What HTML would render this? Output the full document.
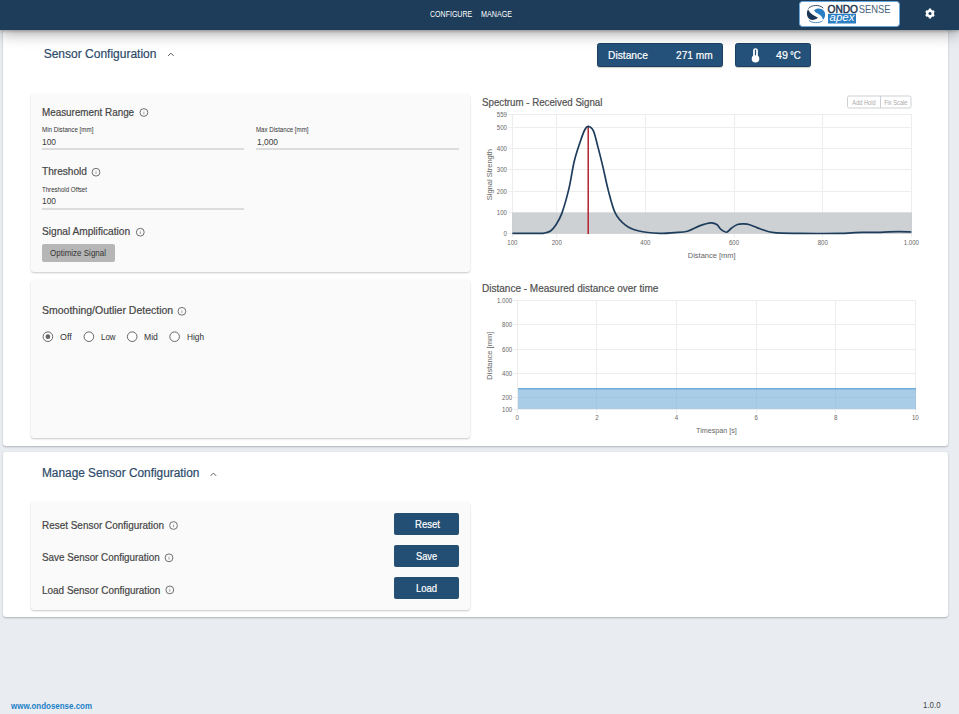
<!DOCTYPE html>
<html><head><meta charset="utf-8">
<style>
*{margin:0;padding:0;box-sizing:border-box}
html,body{width:959px;height:714px;overflow:hidden;background:#e9edf2;font-family:"Liberation Sans",sans-serif;position:relative}
.a{position:absolute;white-space:nowrap;line-height:1;transform-origin:0 0}
#hdr{position:absolute;left:0;top:0;width:959px;height:30px;background:#1d3d5b;box-shadow:0 1px 3px rgba(0,0,0,.25),0 2px 16px rgba(0,0,0,.42)}
.card{position:absolute;left:3px;width:945px;background:#fff;border-radius:3px;box-shadow:0 1px 2px rgba(0,0,0,.25)}
.pnl{position:absolute;left:31px;width:439px;background:#fafafa;border-radius:3px;box-shadow:0 1px 2px rgba(0,0,0,.22)}
.btn{position:absolute;background:#244f75;border-radius:2px}
.box{position:absolute;background:#245179;border:1px solid #1a3f63;border-radius:2.5px;box-shadow:0 1px 1px rgba(0,0,0,.2)}
.uline{position:absolute;height:2px;background:#dcdcdc}
svg{position:absolute;left:0;top:0}
</style></head><body>
<div class="card" style="top:30px;height:416px"></div>
<div class="card" style="top:452px;height:165px"></div>
<div id="hdr"></div>

<div class="box" style="left:597px;top:43px;width:126px;height:24px"></div>
<div class="box" style="left:735px;top:43px;width:76px;height:24px"></div>

<div class="pnl" style="top:94px;height:178px"></div>
<div class="pnl" style="top:280px;height:158px"></div>
<div class="pnl" style="top:502px;height:108px"></div>

<div class="uline" style="left:42px;top:148px;width:202px"></div>
<div class="uline" style="left:256px;top:148px;width:203px"></div>
<div class="uline" style="left:42px;top:208px;width:202px"></div>

<div class="btn" style="left:42px;top:244px;width:72.5px;height:17.5px;background:#b6b6b6"></div>
<div class="btn" style="left:394px;top:513px;width:65px;height:22px"></div>
<div class="btn" style="left:394px;top:545px;width:65px;height:22px"></div>
<div class="btn" style="left:394px;top:577px;width:65px;height:22px"></div>

<svg width="959" height="714" viewBox="0 0 959 714" style="font-family:'Liberation Sans',sans-serif">
<line x1="508.5" y1="212.5" x2="911.5" y2="212.5" stroke="#ededed" stroke-width="1"/>
<line x1="508.5" y1="191.5" x2="911.5" y2="191.5" stroke="#ededed" stroke-width="1"/>
<line x1="508.5" y1="169.5" x2="911.5" y2="169.5" stroke="#ededed" stroke-width="1"/>
<line x1="508.5" y1="148.5" x2="911.5" y2="148.5" stroke="#ededed" stroke-width="1"/>
<line x1="508.5" y1="127.5" x2="911.5" y2="127.5" stroke="#ededed" stroke-width="1"/>
<line x1="508.5" y1="114.5" x2="911.5" y2="114.5" stroke="#ededed" stroke-width="1"/>
<line x1="556.5" y1="114.5" x2="556.5" y2="237.5" stroke="#ededed" stroke-width="1"/>
<line x1="645.5" y1="114.5" x2="645.5" y2="237.5" stroke="#ededed" stroke-width="1"/>
<line x1="734.5" y1="114.5" x2="734.5" y2="237.5" stroke="#ededed" stroke-width="1"/>
<line x1="822.5" y1="114.5" x2="822.5" y2="237.5" stroke="#ededed" stroke-width="1"/>
<line x1="911.5" y1="114.5" x2="911.5" y2="237.5" stroke="#ededed" stroke-width="1"/>
<line x1="512.5" y1="114.5" x2="512.5" y2="237.5" stroke="#ededed" stroke-width="1"/>
<line x1="508.5" y1="233.5" x2="911.5" y2="233.5" stroke="#ededed" stroke-width="1"/>
<rect x="512.0" y="212.55" width="400.0" height="21.25" fill="#c5c9cb" fill-opacity="0.85"/>
<g transform="translate(507.00,236.00) scale(0.87,1)"><text x="0" y="0" font-size="7" text-anchor="end" fill="#666">0</text></g>
<g transform="translate(507.00,214.75) scale(0.87,1)"><text x="0" y="0" font-size="7" text-anchor="end" fill="#666">100</text></g>
<g transform="translate(507.00,193.50) scale(0.87,1)"><text x="0" y="0" font-size="7" text-anchor="end" fill="#666">200</text></g>
<g transform="translate(507.00,172.25) scale(0.87,1)"><text x="0" y="0" font-size="7" text-anchor="end" fill="#666">300</text></g>
<g transform="translate(507.00,151.00) scale(0.87,1)"><text x="0" y="0" font-size="7" text-anchor="end" fill="#666">400</text></g>
<g transform="translate(507.00,129.75) scale(0.87,1)"><text x="0" y="0" font-size="7" text-anchor="end" fill="#666">500</text></g>
<g transform="translate(507.00,117.21) scale(0.87,1)"><text x="0" y="0" font-size="7" text-anchor="end" fill="#666">559</text></g>
<g transform="translate(512.40,244.80) scale(0.87,1)"><text x="0" y="0" font-size="7" text-anchor="middle" fill="#666">100</text></g>
<g transform="translate(556.73,244.80) scale(0.87,1)"><text x="0" y="0" font-size="7" text-anchor="middle" fill="#666">200</text></g>
<g transform="translate(645.39,244.80) scale(0.87,1)"><text x="0" y="0" font-size="7" text-anchor="middle" fill="#666">400</text></g>
<g transform="translate(734.05,244.80) scale(0.87,1)"><text x="0" y="0" font-size="7" text-anchor="middle" fill="#666">600</text></g>
<g transform="translate(822.71,244.80) scale(0.87,1)"><text x="0" y="0" font-size="7" text-anchor="middle" fill="#666">800</text></g>
<g transform="translate(911.37,244.80) scale(0.87,1)"><text x="0" y="0" font-size="7" text-anchor="middle" fill="#666">1.000</text></g>
<g transform="translate(711.70,257.60) scale(1.0,1)"><text x="0" y="0" font-size="7.5" text-anchor="middle" fill="#666">Distance [mm]</text></g>
<text transform="translate(491.9,174.6) rotate(-90)" font-size="7.5" text-anchor="middle" fill="#666">Signal Strength</text>
<line x1="588.2" y1="126.5" x2="588.2" y2="234.00" stroke="#b3212e" stroke-width="1.5"/>
<path d="M512.40,233.29 C515.36,233.29 525.70,233.29 530.13,233.29 C534.56,233.29 536.63,233.32 539.00,233.29 C541.36,233.25 542.40,233.46 544.32,233.07 C546.24,232.69 548.60,232.30 550.52,230.95 C552.44,229.60 553.94,227.97 555.84,225.00 C557.74,222.03 559.74,219.16 561.92,213.10 C564.10,207.04 566.87,197.27 568.92,188.66 C570.97,180.06 572.30,169.32 574.20,161.46 C576.09,153.60 578.56,146.73 580.31,141.49 C582.06,136.25 583.39,132.53 584.70,130.01 C586.02,127.50 586.76,126.26 588.20,126.40 C589.65,126.54 591.80,127.53 593.39,130.86 C594.99,134.19 596.16,140.25 597.78,146.38 C599.40,152.50 601.35,160.29 603.10,167.62 C604.85,174.96 606.25,182.78 608.29,190.36 C610.32,197.94 612.37,207.26 615.29,213.10 C618.21,218.94 621.99,222.49 625.80,225.43 C629.60,228.36 632.42,229.41 638.12,230.74 C643.82,232.07 653.93,233.08 660.02,233.39 C666.11,233.71 670.07,233.01 674.65,232.65 C679.23,232.29 683.37,232.34 687.50,231.21 C691.64,230.07 695.56,227.24 699.47,225.85 C703.39,224.46 708.12,223.09 711.00,222.88 C713.88,222.66 715.06,223.44 716.76,224.57 C718.46,225.71 719.57,228.40 721.19,229.68 C722.82,230.95 724.81,232.47 726.51,232.22 C728.21,231.98 729.58,229.46 731.39,228.19 C733.20,226.91 735.31,225.28 737.37,224.57 C739.44,223.87 741.62,223.87 743.80,223.94 C745.98,224.01 747.64,224.15 750.45,225.00 C753.26,225.85 756.73,227.76 760.65,229.04 C764.56,230.31 767.37,231.92 773.95,232.65 C780.52,233.38 791.97,233.25 800.10,233.39 C808.23,233.54 815.99,233.50 822.71,233.50 C829.43,233.50 835.64,233.50 840.44,233.39 C845.24,233.29 847.83,233.04 851.52,232.86 C855.22,232.69 857.80,232.42 862.61,232.33 C867.41,232.24 874.43,232.46 880.34,232.33 C886.25,232.21 892.90,231.64 898.07,231.59 C903.24,231.53 909.15,231.94 911.37,232.01" fill="none" stroke="#1e3d5c" stroke-width="1.7" stroke-linejoin="round"/>
<rect x="847.5" y="96" width="63.5" height="12" rx="1.5" fill="#fff" stroke="#cdd0d3" stroke-width="1"/>
<line x1="880.5" y1="96" x2="880.5" y2="108" stroke="#cdd0d3" stroke-width="1"/>
<g transform="translate(864.00,105.00) scale(0.9,1)"><text x="0" y="0" font-size="6.3" text-anchor="middle" fill="#aaa">Add Hold</text></g>
<g transform="translate(895.80,105.00) scale(0.9,1)"><text x="0" y="0" font-size="6.3" text-anchor="middle" fill="#aaa">Fix Scale</text></g>
<line x1="513.5" y1="300.5" x2="915.5" y2="300.5" stroke="#ededed" stroke-width="1"/>
<line x1="513.5" y1="324.5" x2="915.5" y2="324.5" stroke="#ededed" stroke-width="1"/>
<line x1="513.5" y1="349.5" x2="915.5" y2="349.5" stroke="#ededed" stroke-width="1"/>
<line x1="513.5" y1="373.5" x2="915.5" y2="373.5" stroke="#ededed" stroke-width="1"/>
<line x1="513.5" y1="397.5" x2="915.5" y2="397.5" stroke="#ededed" stroke-width="1"/>
<line x1="596.5" y1="300.5" x2="596.5" y2="413.5" stroke="#ededed" stroke-width="1"/>
<line x1="676.5" y1="300.5" x2="676.5" y2="413.5" stroke="#ededed" stroke-width="1"/>
<line x1="756.5" y1="300.5" x2="756.5" y2="413.5" stroke="#ededed" stroke-width="1"/>
<line x1="835.5" y1="300.5" x2="835.5" y2="413.5" stroke="#ededed" stroke-width="1"/>
<line x1="915.5" y1="300.5" x2="915.5" y2="413.5" stroke="#ededed" stroke-width="1"/>
<line x1="517.5" y1="300.5" x2="517.5" y2="413.5" stroke="#ededed" stroke-width="1"/>
<rect x="518.0" y="388.77" width="398.0" height="21.23" fill="#74acd9" fill-opacity="0.62"/>
<line x1="518.0" y1="388.77" x2="916.0" y2="388.77" stroke="#73acd9" stroke-width="1.5"/>
<line x1="513.5" y1="409.5" x2="915.5" y2="409.5" stroke="#ededed" stroke-width="1"/>
<g transform="translate(512.20,303.30) scale(0.87,1)"><text x="0" y="0" font-size="7" text-anchor="end" fill="#666">1.000</text></g>
<g transform="translate(512.20,327.43) scale(0.87,1)"><text x="0" y="0" font-size="7" text-anchor="end" fill="#666">800</text></g>
<g transform="translate(512.20,351.56) scale(0.87,1)"><text x="0" y="0" font-size="7" text-anchor="end" fill="#666">600</text></g>
<g transform="translate(512.20,375.70) scale(0.87,1)"><text x="0" y="0" font-size="7" text-anchor="end" fill="#666">400</text></g>
<g transform="translate(512.20,399.83) scale(0.87,1)"><text x="0" y="0" font-size="7" text-anchor="end" fill="#666">200</text></g>
<g transform="translate(512.20,411.90) scale(0.87,1)"><text x="0" y="0" font-size="7" text-anchor="end" fill="#666">100</text></g>
<g transform="translate(517.30,420.10) scale(0.87,1)"><text x="0" y="0" font-size="7" text-anchor="middle" fill="#666">0</text></g>
<g transform="translate(596.90,420.10) scale(0.87,1)"><text x="0" y="0" font-size="7" text-anchor="middle" fill="#666">2</text></g>
<g transform="translate(676.50,420.10) scale(0.87,1)"><text x="0" y="0" font-size="7" text-anchor="middle" fill="#666">4</text></g>
<g transform="translate(756.10,420.10) scale(0.87,1)"><text x="0" y="0" font-size="7" text-anchor="middle" fill="#666">6</text></g>
<g transform="translate(835.70,420.10) scale(0.87,1)"><text x="0" y="0" font-size="7" text-anchor="middle" fill="#666">8</text></g>
<g transform="translate(915.30,420.10) scale(0.87,1)"><text x="0" y="0" font-size="7" text-anchor="middle" fill="#666">10</text></g>
<g transform="translate(716.40,433.40) scale(0.955,1)"><text x="0" y="0" font-size="7.5" text-anchor="middle" fill="#666">Timespan [s]</text></g>
<text transform="translate(491.5,355.7) rotate(-90)" font-size="7.5" text-anchor="middle" fill="#666">Distance [mm]</text>
<rect x="799.5" y="1.5" width="100" height="25" rx="3" fill="#fff" stroke="#6aa5d8" stroke-width="1"/>
<g transform="translate(803,2) scale(0.03359)"><path d="M150,215 C95,300 110,440 190,505 C260,560 370,535 445,470 C380,425 300,400 240,345 C195,300 170,255 150,215Z" fill="#1b3656"/><path d="M330,245 C400,180 540,170 620,260 C685,340 665,465 595,530 C575,445 520,385 440,345 C390,318 350,290 330,245Z" fill="#2a7fc4"/><path d="M160,195 C250,80 500,70 605,185" fill="none" stroke="#1b3656" stroke-width="26"/><path d="M175,545 C260,630 480,640 585,560" fill="none" stroke="#2a7fc4" stroke-width="26"/></g>
<text x="827.5" y="12.6" font-size="10.4" fill="#1f3550" stroke="#1f3550" stroke-width="0.45" textLength="30.5" lengthAdjust="spacingAndGlyphs">ONDO</text>
<text x="858.8" y="12.6" font-size="10.4" fill="#48627d" textLength="31.8" lengthAdjust="spacingAndGlyphs">SENSE</text>
<rect x="828" y="13.8" width="28" height="9.7" fill="#2a7fc4"/>
<text x="829.6" y="21.4" font-size="10.8" fill="#fff" font-style="italic" textLength="24.8" lengthAdjust="spacingAndGlyphs">apex</text>
<path d="M928.96,8.61 L931.04,8.61 L931.35,9.74 L932.58,10.44 L933.72,10.15 L934.76,11.95 L933.94,12.79 L933.94,14.21 L934.76,15.05 L933.72,16.85 L932.58,16.56 L931.35,17.26 L931.04,18.39 L928.96,18.39 L928.65,17.26 L927.42,16.56 L926.28,16.85 L925.24,15.05 L926.06,14.21 L926.06,12.79 L925.24,11.95 L926.28,10.15 L927.42,10.44 L928.65,9.74Z M931.55,13.5 A1.55,1.55 0 1,0 928.45,13.5 A1.55,1.55 0 1,0 931.55,13.5Z" fill="#fff" fill-rule="evenodd"/>
<rect x="753.1" y="48.2" width="4.8" height="10" rx="2.4" fill="#fff"/><circle cx="755.5" cy="58.800000000000004" r="3.8" fill="#fff"/><line x1="755.5" y1="50.2" x2="755.5" y2="54.800000000000004" stroke="#245179" stroke-width="1.2" stroke-linecap="round"/>
<polyline points="168.1,55.900000000000006 170.9,53.1 173.7,55.900000000000006" fill="none" stroke="#606060" stroke-width="1.0"/>
<polyline points="210.6,475.9 213.4,473.09999999999997 216.2,475.9" fill="none" stroke="#606060" stroke-width="1.0"/>
<circle cx="143.9" cy="112.5" r="3.9" fill="none" stroke="#707070" stroke-width="1"/><line x1="143.9" y1="111.7" x2="143.9" y2="114.3" stroke="#999" stroke-width="0.9"/><circle cx="143.9" cy="110.6" r="0.4" fill="#bbb"/>
<circle cx="96" cy="172.2" r="3.9" fill="none" stroke="#707070" stroke-width="1"/><line x1="96" y1="171.39999999999998" x2="96" y2="174.0" stroke="#999" stroke-width="0.9"/><circle cx="96" cy="170.29999999999998" r="0.4" fill="#bbb"/>
<circle cx="140.3" cy="232.2" r="3.9" fill="none" stroke="#707070" stroke-width="1"/><line x1="140.3" y1="231.39999999999998" x2="140.3" y2="234.0" stroke="#999" stroke-width="0.9"/><circle cx="140.3" cy="230.29999999999998" r="0.4" fill="#bbb"/>
<circle cx="181.9" cy="311.3" r="3.9" fill="none" stroke="#707070" stroke-width="1"/><line x1="181.9" y1="310.5" x2="181.9" y2="313.1" stroke="#999" stroke-width="0.9"/><circle cx="181.9" cy="309.40000000000003" r="0.4" fill="#bbb"/>
<circle cx="173.5" cy="525.5" r="3.9" fill="none" stroke="#707070" stroke-width="1"/><line x1="173.5" y1="524.7" x2="173.5" y2="527.3" stroke="#999" stroke-width="0.9"/><circle cx="173.5" cy="523.6" r="0.4" fill="#bbb"/>
<circle cx="169" cy="557.8" r="3.9" fill="none" stroke="#707070" stroke-width="1"/><line x1="169" y1="557.0" x2="169" y2="559.5999999999999" stroke="#999" stroke-width="0.9"/><circle cx="169" cy="555.9" r="0.4" fill="#bbb"/>
<circle cx="169.8" cy="589.9" r="3.9" fill="none" stroke="#707070" stroke-width="1"/><line x1="169.8" y1="589.1" x2="169.8" y2="591.6999999999999" stroke="#999" stroke-width="0.9"/><circle cx="169.8" cy="588.0" r="0.4" fill="#bbb"/>
<circle cx="47.9" cy="336.7" r="4.8" fill="#fff" stroke="#666" stroke-width="1"/><circle cx="47.9" cy="336.7" r="2.4" fill="#666"/>
<circle cx="88.9" cy="336.7" r="4.8" fill="#fff" stroke="#666" stroke-width="1"/>
<circle cx="132.2" cy="336.7" r="4.8" fill="#fff" stroke="#666" stroke-width="1"/>
<circle cx="174.6" cy="336.7" r="4.8" fill="#fff" stroke="#666" stroke-width="1"/>
</svg>
<div class="a" style="left:430.00px;top:10.00px;font-size:8.5px;color:#fff;font-weight:normal;transform:scaleX(0.8280);">CONFIGURE</div>
<div class="a" style="left:481.00px;top:10.00px;font-size:8.5px;color:#fff;font-weight:normal;transform:scaleX(0.8421);">MANAGE</div>
<div class="a" style="left:43.70px;top:48.14px;font-size:12px;color:#2c4a69;font-weight:normal;-webkit-text-stroke:0.2px #2c4a69;">Sensor Configuration</div>
<div class="a" style="left:42.20px;top:467.14px;font-size:12px;color:#2c4a69;font-weight:normal;transform:scaleX(0.9870);-webkit-text-stroke:0.2px #2c4a69;">Manage Sensor Configuration</div>
<div class="a" style="left:607.50px;top:49.97px;font-size:11.5px;color:#fff;font-weight:normal;transform:scaleX(0.8907);-webkit-text-stroke:0.2px #fff;">Distance</div>
<div class="a" style="left:675.60px;top:49.97px;font-size:11.5px;color:#fff;font-weight:normal;transform:scaleX(0.8837);-webkit-text-stroke:0.2px #fff;">271 mm</div>
<div class="a" style="left:775.60px;top:50.19px;font-size:11px;color:#fff;font-weight:normal;transform:scaleX(0.9655);-webkit-text-stroke:0.2px #fff;">49</div>
<div class="a" style="left:789.50px;top:50.19px;font-size:11px;color:#fff;font-weight:normal;transform:scaleX(0.8791);-webkit-text-stroke:0.2px #fff;">°C</div>
<div class="a" style="left:42.00px;top:106.94px;font-size:11px;color:#444;font-weight:normal;transform:scaleX(0.8966);-webkit-text-stroke:0.2px #444;">Measurement Range</div>
<div class="a" style="left:41.70px;top:126.37px;font-size:7px;color:#333;font-weight:normal;transform:scaleX(0.8861);">Min Distance [mm]</div>
<div class="a" style="left:42.00px;top:137.88px;font-size:9px;color:#3a3a3a;font-weight:normal;transform:scaleX(0.9327);">100</div>
<div class="a" style="left:256.00px;top:126.37px;font-size:7px;color:#333;font-weight:normal;transform:scaleX(0.8757);">Max Distance [mm]</div>
<div class="a" style="left:256.50px;top:137.88px;font-size:9px;color:#3a3a3a;font-weight:normal;transform:scaleX(0.9326);">1,000</div>
<div class="a" style="left:42.00px;top:166.19px;font-size:11px;color:#444;font-weight:normal;transform:scaleX(0.9171);-webkit-text-stroke:0.2px #444;">Threshold</div>
<div class="a" style="left:41.70px;top:186.17px;font-size:7px;color:#333;font-weight:normal;transform:scaleX(0.8709);">Threshold Offset</div>
<div class="a" style="left:42.00px;top:197.38px;font-size:9px;color:#3a3a3a;font-weight:normal;transform:scaleX(0.9327);">100</div>
<div class="a" style="left:42.00px;top:226.19px;font-size:11px;color:#444;font-weight:normal;transform:scaleX(0.9231);-webkit-text-stroke:0.2px #444;">Signal Amplification</div>
<div class="a" style="left:49.50px;top:248.88px;font-size:9px;color:#333;font-weight:normal;transform:scaleX(0.8885);">Optimize Signal</div>
<div class="a" style="left:41.70px;top:305.29px;font-size:11px;color:#444;font-weight:normal;transform:scaleX(0.9531);-webkit-text-stroke:0.2px #444;">Smoothing/Outlier Detection</div>
<div class="a" style="left:59.90px;top:332.78px;font-size:9px;color:#333;font-weight:normal;transform:scaleX(0.9888);">Off</div>
<div class="a" style="left:100.70px;top:332.78px;font-size:9px;color:#333;font-weight:normal;transform:scaleX(0.8818);">Low</div>
<div class="a" style="left:143.90px;top:332.78px;font-size:9px;color:#333;font-weight:normal;transform:scaleX(0.9588);">Mid</div>
<div class="a" style="left:186.60px;top:332.78px;font-size:9px;color:#333;font-weight:normal;transform:scaleX(0.9241);">High</div>
<div class="a" style="left:42.00px;top:519.69px;font-size:11px;color:#444;font-weight:normal;transform:scaleX(0.9036);-webkit-text-stroke:0.2px #444;">Reset Sensor Configuration</div>
<div class="a" style="left:42.00px;top:552.39px;font-size:11px;color:#444;font-weight:normal;transform:scaleX(0.8953);-webkit-text-stroke:0.2px #444;">Save Sensor Configuration</div>
<div class="a" style="left:42.00px;top:584.59px;font-size:11px;color:#444;font-weight:normal;transform:scaleX(0.9048);-webkit-text-stroke:0.2px #444;">Load Sensor Configuration</div>
<div class="a" style="left:414.50px;top:518.51px;font-size:10.5px;color:#fff;font-weight:normal;transform:scaleX(0.9087);-webkit-text-stroke:0.2px #fff;">Reset</div>
<div class="a" style="left:415.80px;top:550.71px;font-size:10.5px;color:#fff;font-weight:normal;transform:scaleX(0.8841);-webkit-text-stroke:0.2px #fff;">Save</div>
<div class="a" style="left:415.80px;top:582.81px;font-size:10.5px;color:#fff;font-weight:normal;transform:scaleX(0.9057);-webkit-text-stroke:0.2px #fff;">Load</div>
<div class="a" style="left:481.70px;top:96.69px;font-size:11px;color:#505050;font-weight:normal;transform:scaleX(0.8830);-webkit-text-stroke:0.2px #505050;">Spectrum - Received Signal</div>
<div class="a" style="left:481.90px;top:282.89px;font-size:11px;color:#505050;font-weight:normal;transform:scaleX(0.9102);-webkit-text-stroke:0.2px #505050;">Distance - Measured distance over time</div>
<div class="a" style="left:11.25px;top:700.86px;font-size:9.5px;color:#2080c6;font-weight:bold;transform:scaleX(0.8374);">www.ondosense.com</div>
<div class="a" style="left:922.80px;top:701.28px;font-size:9px;color:#444;font-weight:normal;transform:scaleX(0.8745);">1.0.0</div>
</body></html>
